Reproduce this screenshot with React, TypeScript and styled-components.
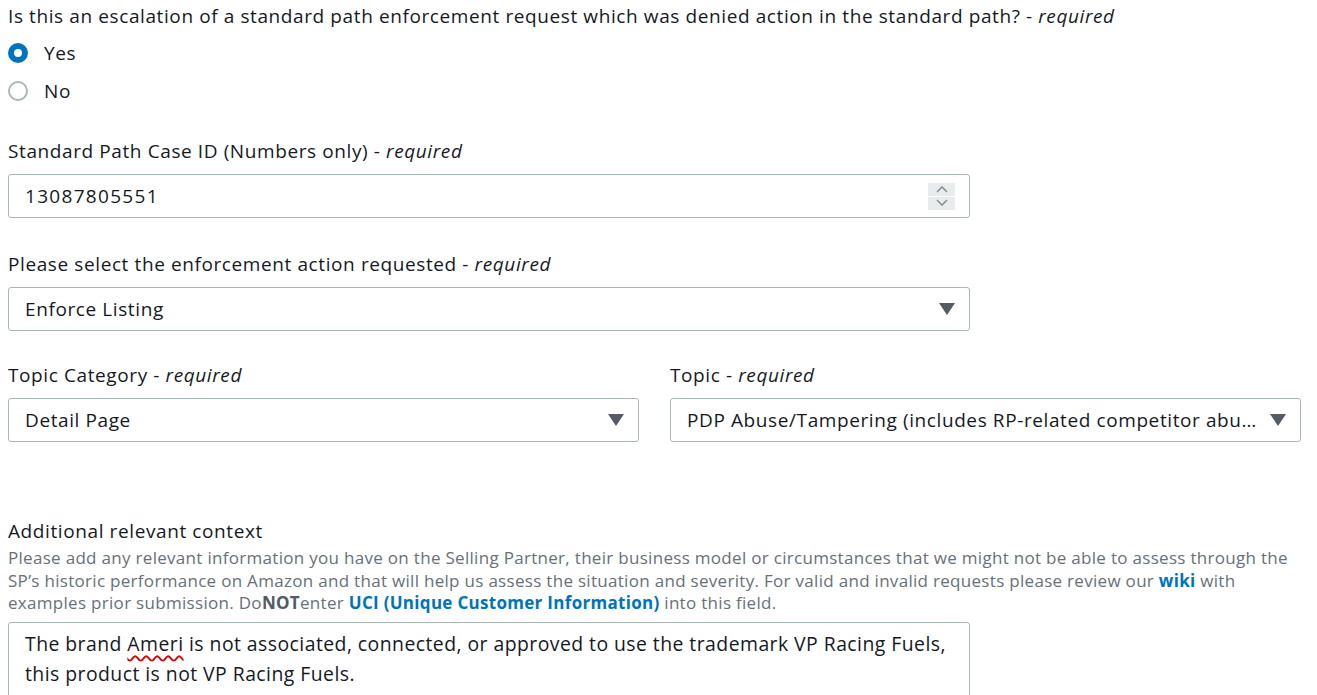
import styled, { createGlobalStyle } from "styled-components";

const GlobalStyle = createGlobalStyle`
  body {
    margin: 0;
    background: #ffffff;
    font-family: "Open Sans", "Noto Sans", sans-serif;
    color: #16191f;
  }
`;

const Form = styled.div`
  width: 1293px;
  padding: 4px 8px 0 8px;
`;

const Field = styled.div<{ $gap?: number; $width?: number; $top?: number }>`
  width: ${(p) => (p.$width ? `${p.$width}px` : "auto")};
  margin-top: ${(p) => p.$top ?? 0}px;
  margin-bottom: ${(p) => p.$gap ?? 0}px;
`;

const Label = styled.div<{ $tight?: boolean }>`
  font-size: 19px;
  letter-spacing: 0.6px;
  line-height: 24px;
  height: 24px;
  color: #16191f;
  margin-bottom: ${(p) => (p.$tight ? 0 : 11)}px;
  white-space: nowrap;

  em {
    font-style: italic;
  }
`;

const RadioGroup = styled.div`
  display: flex;
  flex-direction: column;
  gap: 14px;
  padding-top: 13px;
`;

const RadioRow = styled.label`
  display: flex;
  align-items: center;
  gap: 16px;
  font-size: 19px;
  letter-spacing: 0.6px;
  line-height: 24px;
`;

const RadioDot = styled.span<{ $checked?: boolean }>`
  box-sizing: border-box;
  width: 20px;
  height: 20px;
  border-radius: 50%;
  border: ${(p) => (p.$checked ? "6px solid #0073bb" : "2px solid #aab7b8")};
  background: #fff;
`;

const Box = styled.div`
  box-sizing: border-box;
  height: 44px;
  border: 1px solid #aab7b8;
  border-radius: 3px;
  display: flex;
  align-items: center;
  padding: 0 16px;
  font-size: 19px;
  color: #16191f;
  background: #fff;
`;

const BoxText = styled.span<{ $digits?: boolean }>`
  flex: 1;
  min-width: 0;
  white-space: nowrap;
  overflow: hidden;
  text-overflow: ellipsis;
  letter-spacing: ${(p) => (p.$digits ? "1.3px" : "0.6px")};
`;

const Spinner = styled.div`
  display: flex;
  flex-direction: column;
  gap: 1px;
  margin-right: -2px;
`;

const SpinBtn = styled.div`
  width: 27px;
  height: 13px;
  background: #e9ebed;
  display: flex;
  align-items: center;
  justify-content: center;
`;

const Caret = styled.span`
  flex: none;
  width: 0;
  height: 0;
  border-left: 8px solid transparent;
  border-right: 8px solid transparent;
  border-top: 12px solid #545b64;
  margin-left: 10px;
  margin-right: -2px;
`;

const Row = styled.div`
  display: grid;
  grid-template-columns: 631px 631px;
  column-gap: 31px;
`;

const Help = styled.div`
  width: 1282px;
  font-size: 17px;
  letter-spacing: 0.3px;
  line-height: 22.5px;
  color: #687078;
  margin-top: -7px;
  margin-bottom: 7px;

  b {
    color: #545b64;
  }

  a {
    color: #0073bb;
    font-weight: 700;
    text-decoration: none;
  }
`;

const TextArea = styled.div`
  box-sizing: border-box;
  width: 962px;
  height: 120px;
  border: 1px solid #aab7b8;
  border-radius: 3px;
  padding: 6px 16px;
  font-size: 19.4px;
  letter-spacing: 0.45px;
  line-height: 30px;
  color: #16191f;
`;

const Misspelled = styled.span`
  text-decoration: underline wavy #e00000;
  text-decoration-thickness: 1.5px;
  text-underline-offset: 4px;
`;

function Chevron({ up }: { up?: boolean }) {
  return (
    <svg width="12" height="8" viewBox="0 0 12 8">
      <path
        d={up ? "M1 7 L6 2 L11 7" : "M1 1 L6 6 L11 1"}
        fill="none"
        stroke="#879596"
        strokeWidth="1.6"
      />
    </svg>
  );
}

function Req() {
  return (
    <>
      {" "}
      - <em>required</em>
    </>
  );
}

export default function App() {
  return (
    <>
      <GlobalStyle />
      <Form>
        <Field $gap={36}>
          <Label $tight>
            Is this an escalation of a standard path enforcement request which
            was denied action in the standard path?
            <Req />
          </Label>
          <RadioGroup>
            <RadioRow>
              <RadioDot $checked />
              Yes
            </RadioRow>
            <RadioRow>
              <RadioDot />
              No
            </RadioRow>
          </RadioGroup>
        </Field>

        <Field $gap={34} $width={962}>
          <Label>
            Standard Path Case ID (Numbers only)
            <Req />
          </Label>
          <Box>
            <BoxText $digits>13087805551</BoxText>
            <Spinner>
              <SpinBtn>
                <Chevron up />
              </SpinBtn>
              <SpinBtn>
                <Chevron />
              </SpinBtn>
            </Spinner>
          </Box>
        </Field>

        <Field $gap={32} $width={962}>
          <Label>
            Please select the enforcement action requested
            <Req />
          </Label>
          <Box>
            <BoxText>Enforce Listing</BoxText>
            <Caret />
          </Box>
        </Field>

        <Row>
          <Field>
            <Label>
              Topic Category
              <Req />
            </Label>
            <Box>
              <BoxText>Detail Page</BoxText>
              <Caret />
            </Box>
          </Field>
          <Field>
            <Label>
              Topic
              <Req />
            </Label>
            <Box>
              <BoxText>
                PDP Abuse/Tampering (includes RP-related competitor abuse)
              </BoxText>
              <Caret />
            </Box>
          </Field>
        </Row>

        <Field $top={77}>
          <Label>Additional relevant context</Label>
          <Help>
            Please add any relevant information you have on the Selling Partner,
            their business model or circumstances that we might not be able to
            assess through the SP’s historic performance on Amazon and that will
            help us assess the situation and severity. For valid and invalid
            requests please review our <a href="#">wiki</a> with examples prior
            submission. Do<b>NOT</b>enter{" "}
            <a href="#">UCI (Unique Customer Information)</a> into this field.
          </Help>
          <TextArea>
            The brand <Misspelled>Ameri</Misspelled> is not associated,
            connected, or approved to use the trademark VP Racing Fuels, this
            product is not VP Racing Fuels.
          </TextArea>
        </Field>
      </Form>
    </>
  );
}
